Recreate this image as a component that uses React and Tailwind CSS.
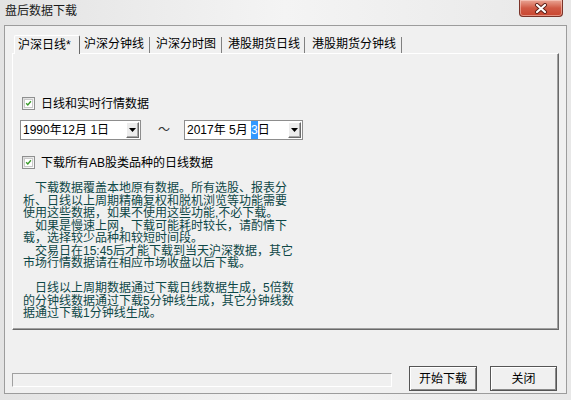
import React from "react";

const FONT = "font-['Liberation_Sans','Noto_Sans_CJK_SC',sans-serif]";

// green tick checkbox, Win7 style
const CheckBox = () => (
  <div className="w-[13px] h-[13px] border border-[#8e8f8f] bg-gradient-to-br from-[#dcdcdc] to-white flex items-center justify-center">
    <div className="w-[9px] h-[9px] bg-white border border-[#c9c9c9] flex items-center justify-center">
      <svg width="9" height="9" viewBox="0 0 9 9">
        <path d="M1.5 4.2 L3.6 6.4 L7.6 1.6" fill="none" stroke="#3a9a2a" strokeWidth="1.8" />
      </svg>
    </div>
  </div>
);

const DropBtn = () => (
  <div className="w-[13px] h-[16px] bg-[#ececec] border border-t-white border-l-white border-b-[#6b6b6b] border-r-[#6b6b6b] shadow-[inset_-1px_-1px_0_#a8a8a8] flex items-center justify-center">
    <svg width="7" height="4" viewBox="0 0 7 4">
      <path d="M0 0 H7 L3.5 4 Z" fill="#000" />
    </svg>
  </div>
);

const lines = [
  "\u3000下载数据覆盖本地原有数据。所有选股、报表分",
  "析、日线以上周期精确复权和脱机浏览等功能需要",
  "使用这些数据，如果不使用这些功能,不必下载。",
  "\u3000如果是慢速上网，下载可能耗时较长，请酌情下",
  "载，选择较少品种和较短时间段。",
  "\u3000交易日在15:45后才能下载到当天沪深数据，其它",
  "市场行情数据请在相应市场收盘以后下载。",
  "\u00a0",
  "\u3000日线以上周期数据通过下载日线数据生成，5倍数",
  "的分钟线数据通过下载5分钟线生成，其它分钟线数",
  "据通过下载1分钟线生成。",
];

export default function App() {
  return (
    <div className={`w-[571px] h-[400px] overflow-hidden flex flex-col bg-gradient-to-r from-[#e3e3e3] via-[#f4f4f4] to-[#e8e8e8] text-[12px] text-black ${FONT}`}>
      {/* title bar */}
      <div className="h-[25px] flex items-start shrink-0">
        <div className="pl-[5px] pt-[2px] text-[12px] text-[#1a1a1a]">盘后数据下载</div>
        <div className="ml-auto mr-[8px] w-[44px] h-[17px] rounded-b-[4px] border border-t-0 border-[#7a3328] bg-gradient-to-b from-[#e9a595] via-[#d05a45] to-[#c8452f] shadow-[inset_0_0_0_1px_rgba(255,220,210,0.5)] flex items-center justify-center">
          <svg width="14" height="11" viewBox="0 0 14 11">
            <path d="M3 2 L11 9 M11 2 L3 9" stroke="#5a1e16" strokeWidth="4" strokeLinecap="round" />
            <path d="M3 2 L11 9 M11 2 L3 9" stroke="#ffffff" strokeWidth="2.2" strokeLinecap="round" />
          </svg>
        </div>
      </div>

      {/* client area */}
      <div className="mx-[4px] h-[369px] border border-[#9c9c9c] bg-[#f0f0f0] pl-[7px] pt-[9px] shrink-0">
        {/* tabs */}
        <div className="flex items-end h-[18px] ml-[2px] leading-[15px]">
          <div className="w-[66px] h-[19px] -mb-px relative z-10 bg-[#f0f0f0] border-t border-l border-t-white border-l-white border-r border-r-[#696969] pl-[3px] pt-[2px] rounded-t-[2px] whitespace-nowrap">
            沪深日线*
          </div>
          <div className="w-[70px] h-[16px] border-r border-r-[#808080] pl-[4px]">沪深分钟线</div>
          <div className="w-[72px] h-[16px] border-r border-r-[#808080] pl-[6px]">沪深分时图</div>
          <div className="w-[83px] h-[16px] border-r border-r-[#808080] pl-[6px]">港股期货日线</div>
          <div className="w-[97px] h-[16px] border-r border-r-[#808080] pl-[7px]">港股期货分钟线</div>
        </div>

        {/* tab panel */}
        <div className="w-[547px] h-[277px] border border-t-white border-l-white border-r-[#696969] border-b-[#696969] shadow-[inset_-1px_-1px_0_#a0a0a0]">
          <div className="flex items-center gap-[6px] pl-[9px] mt-[43px] h-[13px]">
            <CheckBox />
            <span>日线和实时行情数据</span>
          </div>

          <div className="flex items-center mt-[10px] pl-[7px] h-[20px]">
            <div className="w-[121px] h-[20px] bg-white border border-[#8d8d8d] flex items-center pl-[2px] pr-[1px] whitespace-pre">
              <span>1990年12月 1日</span>
              <div className="ml-auto"><DropBtn /></div>
            </div>
            <span className="ml-[17px] w-[26px] text-[#333]">～</span>
            <div className="w-[119px] h-[20px] bg-white border border-[#8d8d8d] flex items-center pl-[2px] pr-[1px] whitespace-pre">
              <span>{"2017年 5月 "}</span>
              <span className="bg-[#3399ff] text-white">3</span>
              <span>日</span>
              <div className="ml-auto"><DropBtn /></div>
            </div>
          </div>

          <div className="flex items-center gap-[6px] pl-[9px] mt-[16px] h-[13px]">
            <CheckBox />
            <span>下载所有AB股类品种的日线数据</span>
          </div>

          <div className="mt-[13px] pl-[10px] text-[#0e4747] leading-[12.5px]">
            {lines.map((t, i) => (
              <div key={i} className="whitespace-pre">{t}</div>
            ))}
          </div>
        </div>

        {/* bottom row */}
        <div className="flex items-start mt-[36px]">
          <div className="mt-[7px] w-[380px] h-[14px] border border-t-[#a0a0a0] border-l-[#a0a0a0] border-b-white border-r-white bg-[#f0f0f0]" />
          <div className="ml-[17px] w-[68px] h-[25px] border border-[#555] bg-[#f0f0f0] shadow-[inset_1px_1px_0_#fff,inset_-1px_-1px_0_#8a8a8a] flex items-center justify-center">
            开始下载
          </div>
          <div className="ml-[13px] w-[67px] h-[25px] border border-[#555] bg-[#f0f0f0] shadow-[inset_1px_1px_0_#fff,inset_-1px_-1px_0_#8a8a8a] flex items-center justify-center">
            关闭
          </div>
        </div>
      </div>
    </div>
  );
}
